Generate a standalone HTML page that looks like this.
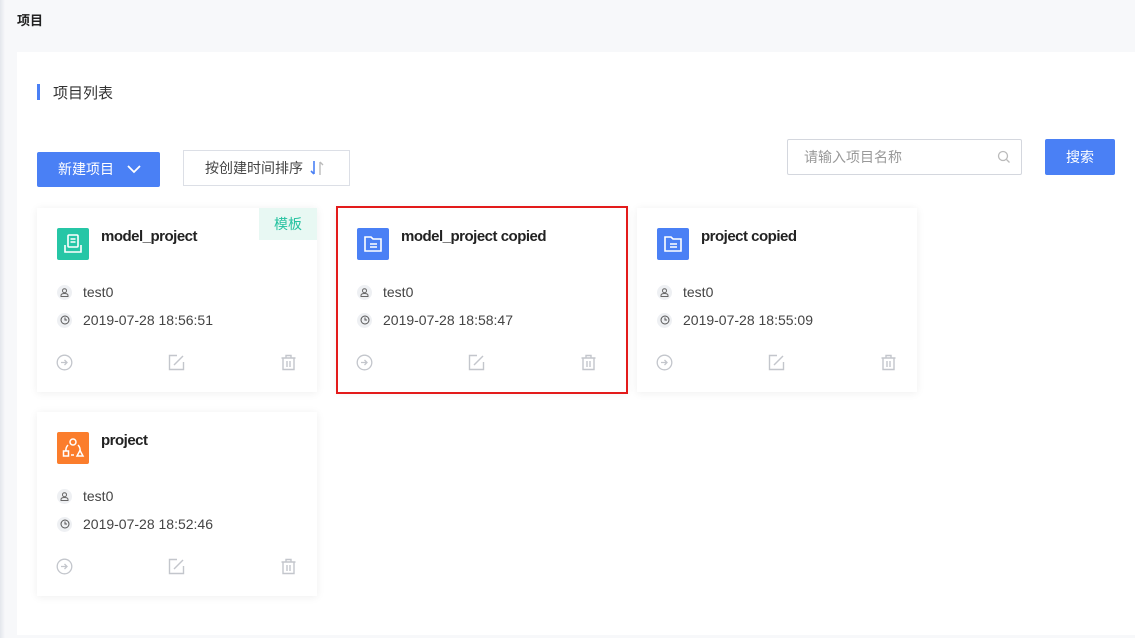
<!DOCTYPE html>
<html><head><meta charset="utf-8"><style>
*{margin:0;padding:0;box-sizing:border-box}
body{width:1135px;height:638px;background:#f7f8fa;font-family:"Liberation Sans","Noto Sans CJK SC",sans-serif;position:relative;overflow:hidden;color:#333}
.abs{position:absolute}
.shadowl{left:0;top:0;width:5px;height:638px;background:linear-gradient(90deg,#e3e6ec,#f7f8fa)}
.panel{left:17px;top:52px;width:1118px;height:583px;background:#fff}
.card{position:absolute;width:280px;height:184px;background:#fff;box-shadow:0 1px 8px rgba(0,0,0,.07)}
.ic{position:absolute;left:20px;top:20px;width:32px;height:32px;border-radius:2px}
.title{position:absolute;left:64px;top:20px;font-size:15px;font-weight:bold;color:#222;letter-spacing:-0.5px}
.row{position:absolute;left:20px;font-size:14px;color:#444;display:flex;align-items:center}
.row .c{width:15px;height:15px;border-radius:50%;background:#eef0f3;margin-right:11px;display:flex;align-items:center;justify-content:center}
.act{position:absolute;top:146px}
</style></head><body>
<div class="abs shadowl"></div>
<div class="abs" style="left:17px;top:10px;font-size:13px;font-weight:bold;color:#222">项目</div>
<div class="abs panel"></div>
<div class="abs" style="left:37px;top:84px;width:3px;height:16px;background:#4a80f5"></div>
<div class="abs" style="left:53px;top:82px;font-size:15px;color:#333">项目列表</div>
<div class="abs" style="left:37px;top:152px;width:123px;height:35px;background:#4a80f5;border-radius:2px;color:#fff;font-size:14px;line-height:35px;padding-left:21px">新建项目
<svg class="abs" style="left:90px;top:13px" width="14" height="9" viewBox="0 0 14 9"><path d="M1 1l6 6 6-6" stroke="#fff" stroke-width="1.8" fill="none"/></svg></div>
<div class="abs" style="left:183px;top:150px;width:167px;height:36px;border:1px solid #dcdfe6;color:#444;font-size:14px;line-height:34px;padding-left:21px">按创建时间排序
<svg class="abs" style="left:125px;top:9px" width="16" height="16" viewBox="0 0 16 16"><path d="M5 1v13M2 11l3 3" stroke="#4a80f5" stroke-width="1.6" fill="none"/><path d="M11 15V2M11 2l3 3" stroke="#bbb" stroke-width="1.4" fill="none"/></svg></div>
<div class="abs" style="left:787px;top:139px;width:235px;height:36px;border:1px solid #d4d7de;border-radius:2px;font-size:14px;color:#999;line-height:34px;padding-left:16px">请输入项目名称
<svg class="abs" style="left:209px;top:10px" width="14" height="14" viewBox="0 0 14 14"><circle cx="6" cy="6" r="4.5" stroke="#bbb" stroke-width="1.3" fill="none"/><path d="M9.5 9.5l3 3" stroke="#bbb" stroke-width="1.3"/></svg></div>
<div class="abs" style="left:1045px;top:139px;width:70px;height:36px;background:#4a80f5;border-radius:2px;color:#fff;font-size:14px;line-height:36px;text-align:center">搜索</div>

<div class="card" style="left:37px;top:208px">
<div class="abs" style="right:0;top:0;width:58px;height:32px;background:#e8f8f3;color:#25c2a0;font-size:14px;line-height:32px;text-align:center">模板</div>
<div class="ic" style="background:#26c6a6"><svg width="32" height="32" viewBox="0 0 32 32"><rect x="11" y="7" width="10" height="12" rx="1" stroke="#fff" stroke-width="1.6" fill="none"/><path d="M13.5 11h5M13.5 14h5M8 17v7h16v-7" stroke="#fff" stroke-width="1.6" fill="none"/></svg></div>
<div class="title">model_project</div>
<div class="row" style="top:76px"><span class="c"><svg width="9" height="9" viewBox="0 0 9 9"><circle cx="4.5" cy="2.7" r="2" stroke="#666" fill="none"/><path d="M1 8.5h7V7.5C8 6 6 5.5 4.5 5.5S1 6 1 7.5z" stroke="#666" fill="none"/></svg></span>test0</div>
<div class="row" style="top:104px"><span class="c"><svg width="10" height="10" viewBox="0 0 10 10"><circle cx="5" cy="5" r="4" stroke="#555" fill="none"/><path d="M5 2.5V5h2" stroke="#555" fill="none"/></svg></span>2019-07-28 18:56:51</div>
<svg class="act" style="left:19px" width="17" height="17" viewBox="0 0 17 17"><circle cx="8.5" cy="8.5" r="7.3" stroke="#c3c6cc" stroke-width="1.3" fill="none"/><path d="M5 8.5h6M8.5 6l2.5 2.5L8.5 11" stroke="#c3c6cc" stroke-width="1.3" fill="none"/></svg>
<svg class="act" style="left:131px" width="17" height="17" viewBox="0 0 17 17"><path d="M9 1.5H1.5v14h14V8" stroke="#c3c6cc" stroke-width="1.4" fill="none"/><path d="M6 11l9-9" stroke="#c3c6cc" stroke-width="1.4"/></svg>
<svg class="act" style="left:243px" width="17" height="17" viewBox="0 0 17 17"><path d="M1.5 4h14M6 4V1.5h5V4M3 4v11.5h11V4M7 7v6M10 7v6" stroke="#c3c6cc" stroke-width="1.4" fill="none"/></svg>
</div>

<div class="card" style="left:337px;top:208px;width:290px">
<div class="ic" style="background:#4a80f5"><svg width="32" height="32" viewBox="0 0 32 32"><path d="M8 9h6l2 2h8v12H8z" stroke="#fff" stroke-width="1.6" fill="none"/><path d="M13 16h7M13 19h7" stroke="#fff" stroke-width="1.5"/></svg></div>
<div class="title">model_project copied</div>
<div class="row" style="top:76px"><span class="c"><svg width="9" height="9" viewBox="0 0 9 9"><circle cx="4.5" cy="2.7" r="2" stroke="#666" fill="none"/><path d="M1 8.5h7V7.5C8 6 6 5.5 4.5 5.5S1 6 1 7.5z" stroke="#666" fill="none"/></svg></span>test0</div>
<div class="row" style="top:104px"><span class="c"><svg width="10" height="10" viewBox="0 0 10 10"><circle cx="5" cy="5" r="4" stroke="#555" fill="none"/><path d="M5 2.5V5h2" stroke="#555" fill="none"/></svg></span>2019-07-28 18:58:47</div>
<svg class="act" style="left:19px" width="17" height="17" viewBox="0 0 17 17"><circle cx="8.5" cy="8.5" r="7.3" stroke="#c3c6cc" stroke-width="1.3" fill="none"/><path d="M5 8.5h6M8.5 6l2.5 2.5L8.5 11" stroke="#c3c6cc" stroke-width="1.3" fill="none"/></svg>
<svg class="act" style="left:131px" width="17" height="17" viewBox="0 0 17 17"><path d="M9 1.5H1.5v14h14V8" stroke="#c3c6cc" stroke-width="1.4" fill="none"/><path d="M6 11l9-9" stroke="#c3c6cc" stroke-width="1.4"/></svg>
<svg class="act" style="left:243px" width="17" height="17" viewBox="0 0 17 17"><path d="M1.5 4h14M6 4V1.5h5V4M3 4v11.5h11V4M7 7v6M10 7v6" stroke="#c3c6cc" stroke-width="1.4" fill="none"/></svg>
</div>
<div class="abs" style="left:336px;top:206px;width:292px;height:188px;border:2px solid #e31b1b"></div>

<div class="card" style="left:637px;top:208px">
<div class="ic" style="background:#4a80f5"><svg width="32" height="32" viewBox="0 0 32 32"><path d="M8 9h6l2 2h8v12H8z" stroke="#fff" stroke-width="1.6" fill="none"/><path d="M13 16h7M13 19h7" stroke="#fff" stroke-width="1.5"/></svg></div>
<div class="title">project copied</div>
<div class="row" style="top:76px"><span class="c"><svg width="9" height="9" viewBox="0 0 9 9"><circle cx="4.5" cy="2.7" r="2" stroke="#666" fill="none"/><path d="M1 8.5h7V7.5C8 6 6 5.5 4.5 5.5S1 6 1 7.5z" stroke="#666" fill="none"/></svg></span>test0</div>
<div class="row" style="top:104px"><span class="c"><svg width="10" height="10" viewBox="0 0 10 10"><circle cx="5" cy="5" r="4" stroke="#555" fill="none"/><path d="M5 2.5V5h2" stroke="#555" fill="none"/></svg></span>2019-07-28 18:55:09</div>
<svg class="act" style="left:19px" width="17" height="17" viewBox="0 0 17 17"><circle cx="8.5" cy="8.5" r="7.3" stroke="#c3c6cc" stroke-width="1.3" fill="none"/><path d="M5 8.5h6M8.5 6l2.5 2.5L8.5 11" stroke="#c3c6cc" stroke-width="1.3" fill="none"/></svg>
<svg class="act" style="left:131px" width="17" height="17" viewBox="0 0 17 17"><path d="M9 1.5H1.5v14h14V8" stroke="#c3c6cc" stroke-width="1.4" fill="none"/><path d="M6 11l9-9" stroke="#c3c6cc" stroke-width="1.4"/></svg>
<svg class="act" style="left:243px" width="17" height="17" viewBox="0 0 17 17"><path d="M1.5 4h14M6 4V1.5h5V4M3 4v11.5h11V4M7 7v6M10 7v6" stroke="#c3c6cc" stroke-width="1.4" fill="none"/></svg>
</div>

<div class="card" style="left:37px;top:412px">
<div class="ic" style="background:#fb7d2c"><svg width="32" height="32" viewBox="0 0 32 32"><circle cx="16" cy="10" r="3" stroke="#fff" stroke-width="1.5" fill="none"/><path d="M11 13a7 7 0 0 0-2 6M21 13a7 7 0 0 1 2 6" stroke="#fff" stroke-width="1.5" fill="none"/><rect x="6.5" y="19" width="5" height="5" stroke="#fff" stroke-width="1.5" fill="none"/><path d="M23 18.5l3 5.5h-6z" stroke="#fff" stroke-width="1.5" fill="none"/><path d="M14 23h3" stroke="#fff" stroke-width="1.5"/></svg></div>
<div class="title">project</div>
<div class="row" style="top:76px"><span class="c"><svg width="9" height="9" viewBox="0 0 9 9"><circle cx="4.5" cy="2.7" r="2" stroke="#666" fill="none"/><path d="M1 8.5h7V7.5C8 6 6 5.5 4.5 5.5S1 6 1 7.5z" stroke="#666" fill="none"/></svg></span>test0</div>
<div class="row" style="top:104px"><span class="c"><svg width="10" height="10" viewBox="0 0 10 10"><circle cx="5" cy="5" r="4" stroke="#555" fill="none"/><path d="M5 2.5V5h2" stroke="#555" fill="none"/></svg></span>2019-07-28 18:52:46</div>
<svg class="act" style="left:19px" width="17" height="17" viewBox="0 0 17 17"><circle cx="8.5" cy="8.5" r="7.3" stroke="#c3c6cc" stroke-width="1.3" fill="none"/><path d="M5 8.5h6M8.5 6l2.5 2.5L8.5 11" stroke="#c3c6cc" stroke-width="1.3" fill="none"/></svg>
<svg class="act" style="left:131px" width="17" height="17" viewBox="0 0 17 17"><path d="M9 1.5H1.5v14h14V8" stroke="#c3c6cc" stroke-width="1.4" fill="none"/><path d="M6 11l9-9" stroke="#c3c6cc" stroke-width="1.4"/></svg>
<svg class="act" style="left:243px" width="17" height="17" viewBox="0 0 17 17"><path d="M1.5 4h14M6 4V1.5h5V4M3 4v11.5h11V4M7 7v6M10 7v6" stroke="#c3c6cc" stroke-width="1.4" fill="none"/></svg>
</div>
</body></html>
